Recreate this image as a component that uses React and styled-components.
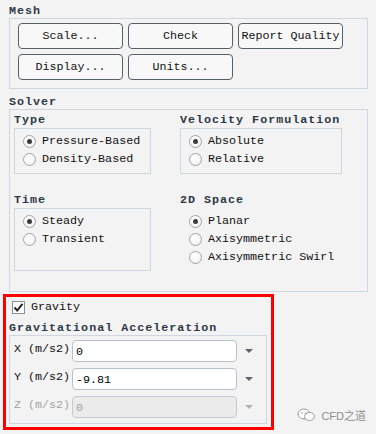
import React from "react";
import styled, { createGlobalStyle } from "styled-components";

const GlobalStyle = createGlobalStyle`
  html, body {
    margin: 0;
    padding: 0;
    background: #f3f3f3;
  }
  body {
    font-family: "Liberation Mono", "DejaVu Sans Mono", monospace;
    font-size: 11.7px;
    color: #111;
  }
`;

const Page = styled.div`
  position: relative;
  width: 376px;
  height: 434px;
  padding-top: 4px;
  box-sizing: border-box;
  overflow: hidden;
`;

const Heading = styled.div`
  height: 14px;
  line-height: 14px;
  margin-top: ${p => p.$top || 0}px;
  margin-left: ${p => p.$left || 0}px;
  margin-bottom: ${p => p.$bottom || 0}px;
  font-weight: bold;
  letter-spacing: 1px;
  color: #2e3846;
  white-space: nowrap;
`;

const GroupBox = styled.div`
  margin-left: 9px;
  width: 359px;
  box-sizing: border-box;
  border: 1px solid #cfd6e2;
`;

const ButtonGrid = styled.div`
  display: grid;
  grid-template-columns: repeat(3, 105px);
  grid-auto-rows: 26px;
  gap: 5px;
  padding: 4px 0 8px 8px;
`;

const Button = styled.button`
  padding: 0;
  border: 1px solid #55606b;
  border-radius: 4px;
  background: #f8f8f8;
  font: inherit;
  color: #111;
  white-space: nowrap;
`;

const SolverGrid = styled.div`
  display: grid;
  grid-template-columns: 137px 162px;
  column-gap: 29px;
  row-gap: 19px;
  padding: 3px 0 20px 4px;
`;

const Column = styled.div`
  display: flex;
  flex-direction: column;
`;

const OptionBox = styled.div`
  box-sizing: border-box;
  height: ${p => p.$height}px;
  border: 1px solid #cfd6e2;
  padding: 3px 0 0 8px;
`;

const OptionList = styled.div`
  padding: 4px 0 0 9px;
`;

const OptionRow = styled.div`
  display: flex;
  align-items: center;
  gap: 6px;
  height: 18px;
  white-space: nowrap;
`;

const RadioDot = styled.span`
  position: relative;
  flex: none;
  width: 13px;
  height: 13px;
  box-sizing: border-box;
  border: 1px solid #a4a4a4;
  border-radius: 50%;
  background: radial-gradient(circle at 40% 35%, #ffffff 0%, #f6f6f6 60%, #e4e4e4 100%);

  &::after {
    content: "";
    display: ${p => (p.$on ? "block" : "none")};
    position: absolute;
    left: 3px;
    top: 3px;
    width: 5px;
    height: 5px;
    border-radius: 50%;
    background: #3c3c3c;
  }
`;

const Highlight = styled.div`
  margin: 2px 0 0 3px;
  width: 271px;
  box-sizing: border-box;
  border: 3px solid #ff0000;
  padding: 1px 0 3px 3px;
`;

const CheckRow = styled.div`
  display: flex;
  align-items: center;
  gap: 6px;
  height: 18px;
  padding-left: 3px;
`;

const CheckBox = styled.span`
  display: flex;
  align-items: center;
  justify-content: center;
  width: 13px;
  height: 13px;
  box-sizing: border-box;
  border: 1px solid #8e8f8f;
  background: #fff;
`;

const AccelBox = styled.div`
  width: 258px;
  box-sizing: border-box;
  border: 1px solid #cfd6e2;
  padding: 4px 0 5px 4px;
  display: flex;
  flex-direction: column;
  gap: 6px;
`;

const FieldRow = styled.div`
  display: flex;
  align-items: flex-start;
  height: 22px;
`;

const FieldLabel = styled.span`
  width: 58px;
  line-height: 18px;
  white-space: nowrap;
  color: ${p => (p.$disabled ? "#a3a3a3" : "#111")};
`;

const FieldInput = styled.input`
  width: 165px;
  height: 22px;
  box-sizing: border-box;
  margin: 0;
  padding: 2px 3px 0;
  border: 1px solid ${p => (p.disabled ? "#c6cad0" : "#b7c1ce")};
  border-radius: 4px;
  background: ${p => (p.disabled ? "#ebebeb" : "#fff")};
  font: inherit;
  color: ${p => (p.disabled ? "#a3a3a3" : "#000")};
  outline: none;
`;

const DropArrow = styled.span`
  align-self: center;
  margin-left: 8px;
  width: 0;
  height: 0;
  border-left: 4px solid transparent;
  border-right: 4px solid transparent;
  border-top: 4px solid ${p => (p.$disabled ? "#b0b4ba" : "#5d6570")};
`;

const Watermark = styled.div`
  position: absolute;
  right: 10px;
  bottom: 11px;
  display: flex;
  align-items: center;
  gap: 5px;
  font-family: "Liberation Sans", "Noto Sans CJK SC", sans-serif;
  font-size: 11px;
  color: #8a8a8a;
  text-shadow: 0 0 1px #fff;
`;

const Radio = ({ on, children }) => (
  <OptionRow>
    <RadioDot $on={on} />
    <span>{children}</span>
  </OptionRow>
);

const Field = ({ axis, value, disabled }) => (
  <FieldRow>
    <FieldLabel $disabled={disabled}>{axis} (m/s2)</FieldLabel>
    <FieldInput value={value} disabled={disabled} readOnly />
    <DropArrow $disabled={disabled} />
  </FieldRow>
);

const App = () => (
  <Page>
    <GlobalStyle />
    <Heading $left={9}>Mesh</Heading>
    <GroupBox>
      <ButtonGrid>
        <Button>Scale...</Button>
        <Button>Check</Button>
        <Button>Report Quality</Button>
        <Button>Display...</Button>
        <Button>Units...</Button>
      </ButtonGrid>
    </GroupBox>

    <Heading $left={9} $top={6}>Solver</Heading>
    <GroupBox>
      <SolverGrid>
        <Column>
          <Heading $bottom={1}>Type</Heading>
          <OptionBox $height={46}>
            <Radio on>Pressure-Based</Radio>
            <Radio>Density-Based</Radio>
          </OptionBox>
        </Column>
        <Column>
          <Heading $bottom={1}>Velocity Formulation</Heading>
          <OptionBox $height={46}>
            <Radio on>Absolute</Radio>
            <Radio>Relative</Radio>
          </OptionBox>
        </Column>
        <Column>
          <Heading $bottom={1}>Time</Heading>
          <OptionBox $height={63}>
            <Radio on>Steady</Radio>
            <Radio>Transient</Radio>
          </OptionBox>
        </Column>
        <Column>
          <Heading $bottom={1}>2D Space</Heading>
          <OptionList>
            <Radio on>Planar</Radio>
            <Radio>Axisymmetric</Radio>
            <Radio>Axisymmetric Swirl</Radio>
          </OptionList>
        </Column>
      </SolverGrid>
    </GroupBox>

    <Highlight>
      <CheckRow>
        <CheckBox>
          <svg width="11" height="11" viewBox="0 0 11 11">
            <path d="M1.5 5.5 L4.2 8.5 L9.5 1.8" fill="none" stroke="#222" strokeWidth="2" />
          </svg>
        </CheckBox>
        <span>Gravity</span>
      </CheckRow>
      <Heading $top={5}>Gravitational Acceleration</Heading>
      <AccelBox>
        <Field axis="X" value="0" />
        <Field axis="Y" value="-9.81" />
        <Field axis="Z" value="0" disabled />
      </AccelBox>
    </Highlight>

    <Watermark>
      <svg width="19" height="14" viewBox="0 0 19 14">
        <ellipse cx="7" cy="6" rx="6" ry="5" fill="#fff" stroke="#9a9a9a" strokeWidth="1" />
        <ellipse cx="12.5" cy="8.5" rx="5" ry="4" fill="#fff" stroke="#9a9a9a" strokeWidth="1" />
        <circle cx="5" cy="5" r="0.8" fill="#9a9a9a" />
        <circle cx="8.5" cy="5" r="0.8" fill="#9a9a9a" />
      </svg>
      <span>CFD之道</span>
    </Watermark>
  </Page>
);

export default App;
